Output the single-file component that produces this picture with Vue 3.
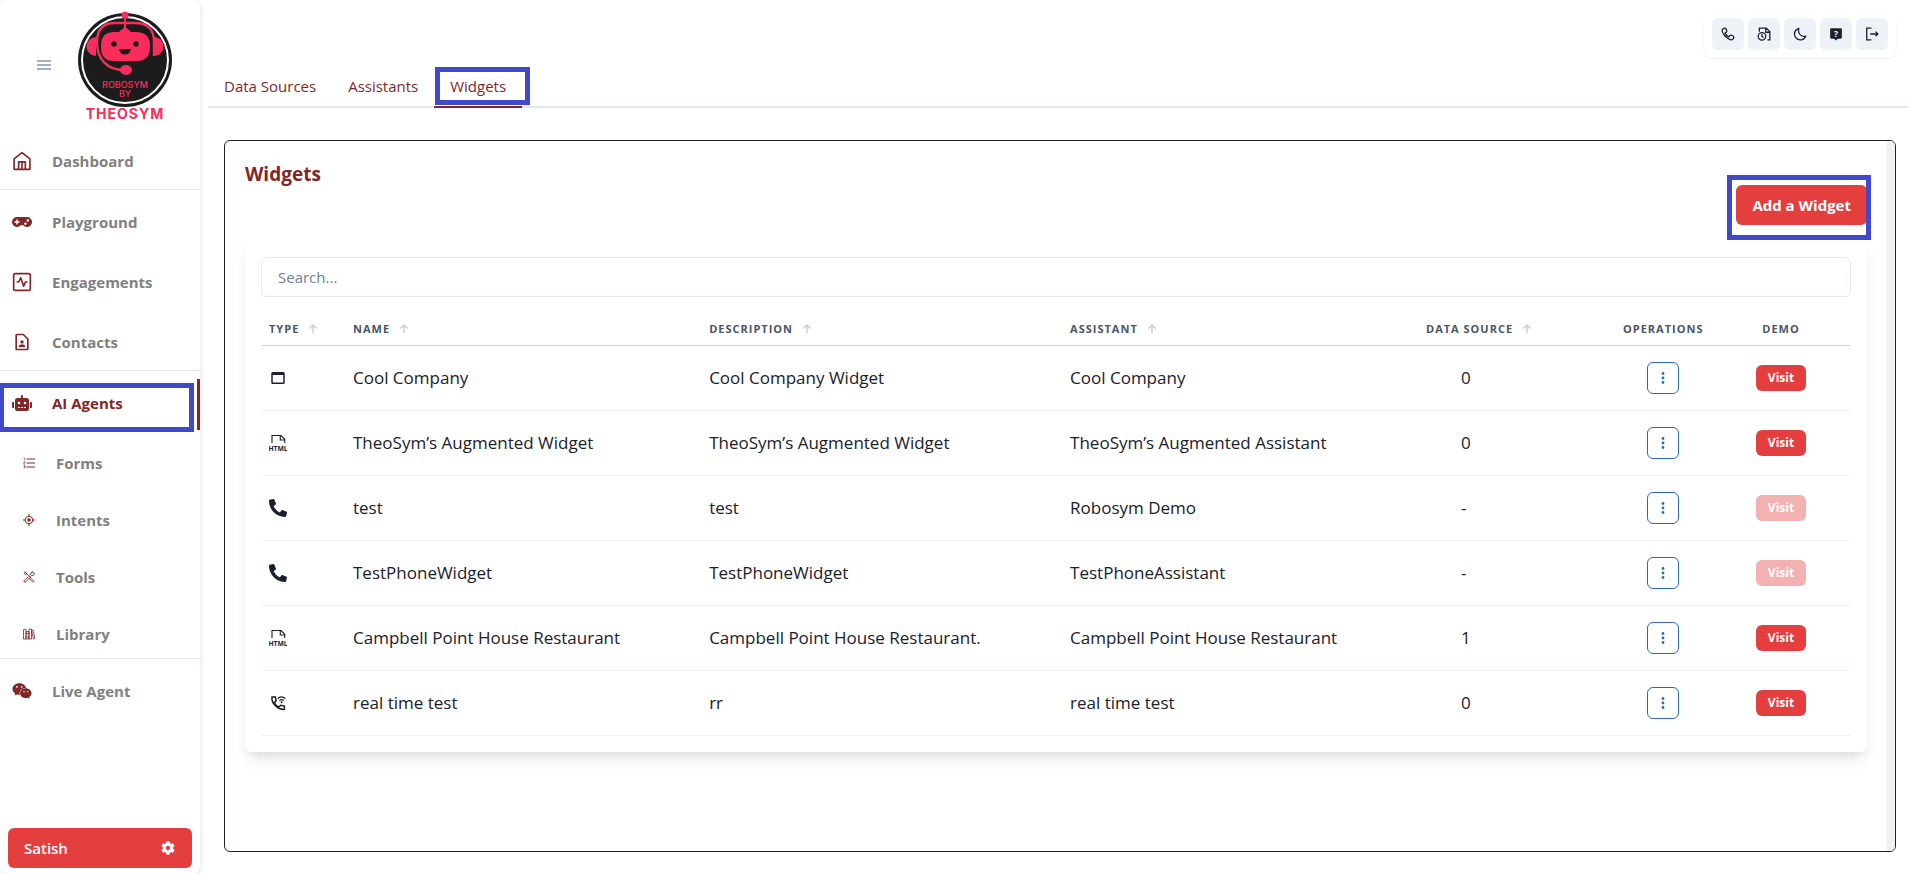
<template>
  <div class="layout">
    <aside class="sidebar">
      <div class="brand">
        <button class="menu-btn" aria-label="Toggle menu">
          <svg viewBox="0 0 14 10" width="14" height="10"><path d="M0 1h14M0 5h14M0 9h14" stroke="#a0aec0" stroke-width="2" /></svg>
        </button>
        <svg class="logo" viewBox="0 0 96 112" width="96" height="112">
          <circle cx="48" cy="51" r="47" fill="#1c1c1c" />
          <circle cx="48" cy="51" r="43" fill="none" stroke="#fff" stroke-width="2" />
          <path d="M19 28a9.500 9.500 0 0 0 0 19zM77 28a9.500 9.500 0 0 1 0 19z" fill="#f92d5c" />
          <path d="M77 47V33Q77 14 58 14H38Q20 14 20 33C20 50 30 61 47 61" fill="none" stroke="#f92d5c" stroke-width="2.400" />
          <path d="M48 6v17" stroke="#f92d5c" stroke-width="2" />
          <circle cx="48" cy="6" r="3.600" fill="#f92d5c" />
          <path d="M42 23q1-2 3-2.500l3-3 3 3q2 .5 3 2.500h5q14 0 14 14v1q0 14-14 14H37q-13 0-13-14v-1q0-14 13-14z" fill="#f92d5c" />
          <circle cx="37" cy="35" r="2.700" fill="#1c1c1c" />
          <circle cx="59" cy="35" r="2.700" fill="#1c1c1c" />
          <path d="M42 40h12q-1 5.500-6 5.500T42 40z" fill="#1c1c1c" />
          <ellipse cx="49" cy="61" rx="6" ry="5" fill="#f92d5c" />
          <text x="48" y="79" class="logo-small">ROBOSYM</text>
          <text x="48" y="88" class="logo-small">BY</text>
          <text x="48" y="110" class="logo-name">THEOSYM</text>
        </svg>
      </div>
      <nav class="nav">
        <a
          v-for="item in menu"
          :key="item.label"
          href="#"
          class="nav-item"
          :class="{ sub: item.sub, active: item.active, divided: item.divided }"
          @click.prevent
        >
          <svg class="nav-icon" :viewBox="item.box || '0 0 24 24'" v-html="icons[item.icon]"></svg>
          <span>{{ item.label }}</span>
          <i v-if="item.active" class="marker marker-nav"></i>
        </a>
      </nav>
      <button class="user-btn">
        <span>Satish</span>
        <svg viewBox="0 0 512 512" width="14" height="14" v-html="icons.cog"></svg>
      </button>
    </aside>

    <main class="main">
      <header class="topbar">
        <div class="tabs" role="tablist">
          <button
            v-for="tab in tabs"
            :key="tab"
            class="tab"
            role="tab"
            :class="{ active: tab === currentTab }"
            @click="currentTab = tab"
          >
            {{ tab }}
            <i v-if="tab === currentTab" class="marker marker-tab"></i>
          </button>
        </div>
        <div class="tools">
          <button v-for="tool in tools" :key="tool.icon" class="tool" :aria-label="tool.label">
            <svg viewBox="0 0 24 24" width="14" height="14" v-html="icons[tool.icon]"></svg>
          </button>
        </div>
      </header>

      <section class="panel">
        <div class="panel-body">
          <div class="panel-head">
            <h1>Widgets</h1>
            <button class="add-btn">Add a Widget<i class="marker marker-add"></i></button>
          </div>
          <div class="card">
            <input v-model="search" class="search" type="text" placeholder="Search..." aria-label="Search" />
            <table>
              <colgroup>
                <col v-for="col in columns" :key="col.label" :class="'col-' + col.key" />
              </colgroup>
              <thead>
                <tr>
                  <th v-for="col in columns" :key="col.label" :class="{ center: !col.sortable }">
                    {{ col.label }}
                    <svg v-if="col.sortable" class="sort" viewBox="0 0 8 9" width="8" height="9">
                      <path d="M4 9V1M.5 4.500L4 1l3.500 3.500" fill="none" stroke="#c8cbd2" stroke-width="1.400" />
                    </svg>
                  </th>
                </tr>
              </thead>
              <tbody>
                <tr v-for="row in filtered" :key="row.name">
                  <td><svg class="type-icon" :viewBox="row.type === 'phone' ? '0 0 512 512' : '0 0 24 24'" v-html="icons[row.type]"></svg></td>
                  <td>{{ row.name }}</td>
                  <td>{{ row.description }}</td>
                  <td>{{ row.assistant }}</td>
                  <td class="source">{{ row.source }}</td>
                  <td class="center">
                    <button class="more-btn" aria-label="Operations">
                      <svg viewBox="0 0 4 14" width="4" height="14"><circle cx="2" cy="2.500" r="1.400" /><circle cx="2" cy="7" r="1.400" /><circle cx="2" cy="11.500" r="1.400" /></svg>
                    </button>
                  </td>
                  <td class="center"><button class="visit-btn" :disabled="row.source === '-'">Visit</button></td>
                </tr>
              </tbody>
            </table>
          </div>
        </div>
        <div class="track"></div>
      </section>
    </main>
  </div>
</template>

<script setup>
import { ref, computed } from 'vue'

const icons = {
  home: '<path d="M2.500 22V9.500L12 2l9.500 7.500V22zM8 22v-9h8v9M12 13v9" fill="none" stroke="currentColor" stroke-width="2" stroke-linejoin="round"/>',
  gamepad: '<path fill-rule="evenodd" d="M6 6h12a6 6 0 1 1-4.500 10h-3A6 6 0 1 1 6 6zM5.200 9v2.200H3v1.600h2.200V15h1.600v-2.200H9v-1.600H6.800V9zM16 12.500a1.500 1.500 0 1 0 .1 0zM19 8.600a1.500 1.500 0 1 0 .1 0z"/>',
  pulse: '<rect x="2" y="2" width="20" height="20" rx="2" fill="none" stroke="currentColor" stroke-width="2"/><path d="M5.500 12H8l2.500-5 3.500 10 2-5h2.500" fill="none" stroke="currentColor" stroke-width="2" stroke-linejoin="round"/>',
  contact: '<path fill-rule="evenodd" d="M14 2H6C4.900 2 4 2.900 4 4v16c0 1.100.9 2 2 2h12c1.100 0 2-.9 2-2V8zM18 20H6V4h7.200L18 8.800z"/><circle cx="12" cy="12" r="2"/><path d="M8 18c0-2.500 2-3 4-3s4 .5 4 3z"/>',
  robot: '<path d="M32 224H64V416H32A32 32 0 0 1 0 384V256A32 32 0 0 1 32 224zm512-48V448a64 64 0 0 1-64 64H160a64 64 0 0 1-64-64V176a80 80 0 0 1 80-80H288V32a32 32 0 0 1 64 0V96H464A80 80 0 0 1 544 176zM264 256a40 40 0 1 0-40 40A40 40 0 0 0 264 256zm-8 128H192v32h64zm96 0H288v32h64zM456 256a40 40 0 1 0-40 40A40 40 0 0 0 456 256zm-8 128H384v32h64zM640 256V384a32 32 0 0 1-32 32H576V224h32A32 32 0 0 1 640 256z"/>',
  list: '<path d="M7 4h17M7 12h17M7 20h17" stroke="currentColor" stroke-width="2"/><path d="M1 2h2.500v5M1 9.500h3L1 14h3M1 17h3v5H1M2 19.500h2" fill="none" stroke="currentColor" stroke-width="1.300"/>',
  target: '<circle cx="12" cy="12" r="7.500" fill="none" stroke="currentColor" stroke-width="2"/><circle cx="12" cy="12" r="3.500"/><path d="M12 0v5M12 19v5M0 12h5M19 12h5" stroke="currentColor" stroke-width="2"/>',
  tools: '<path d="M2 2l4 1 1.500 3L18 16.500l4 4-2 2-8-8M7.500 6L5 7.500 1.500 4M13 9l3-3V3.500L19 1l1 3 3 1-2.500 4H17L6 21.500q-2 1.500-3.500 0T3 18l7-6" fill="none" stroke="currentColor" stroke-width="1.800" stroke-linejoin="round"/>',
  library: '<path d="M1 3h5v19H1zM6 7h6v15H6zM12 2h5v20h-5zM17 5l3-1 4 17-3 1zM6 11h6M6 18h6" fill="none" stroke="currentColor" stroke-width="1.600"/>',
  wechat: '<path d="M385.200 167.600c6.400 0 12.600.3 18.800 1.100C387.400 90.300 303.300 32 207.700 32 100.500 32 13 104.800 13 197.400c0 53.400 29.300 97.500 77.900 131.600l-19.300 58.600 68-34.100c24.400 4.800 43.800 9.700 68.200 9.700 6.200 0 12.100-.3 18.300-.8-4-12.900-6.200-26.600-6.200-40.800-.1-84.900 72.900-154 165.300-154zm-104.500-52.900c14.500 0 24.200 9.700 24.200 24.400 0 14.500-9.700 24.200-24.200 24.200-14.800 0-29.300-9.700-29.300-24.200.1-14.700 14.600-24.400 29.300-24.400zm-136.400 48.600c-14.500 0-29.300-9.700-29.300-24.200 0-14.800 14.800-24.400 29.300-24.400 14.800 0 24.400 9.700 24.400 24.400 0 14.600-9.600 24.200-24.400 24.200zM563 319.400c0-77.900-77.900-141.300-165.400-141.300-92.700 0-165.400 63.400-165.400 141.300S305 460.700 397.600 460.700c19.300 0 38.900-5.100 58.600-9.900l53.400 29.300-14.800-48.600C534 402.100 563 363.200 563 319.400zm-219.100-24.500c-9.700 0-19.300-9.700-19.300-19.600 0-9.700 9.700-19.300 19.300-19.300 14.800 0 24.400 9.700 24.400 19.300 0 10-9.700 19.600-24.400 19.600zm107.100 0c-9.700 0-19.300-9.700-19.300-19.600 0-9.700 9.700-19.300 19.300-19.300 14.500 0 24.400 9.700 24.400 19.300.1 10-9.900 19.600-24.400 19.600z"/>',
  cog: '<path d="M487.400 315.700l-42.600-24.600c4.300-23.200 4.300-47 0-70.200l42.600-24.600c4.900-2.800 7.100-8.600 5.500-14-11.100-35.600-30-67.800-54.700-94.600-3.800-4.100-10-5.100-14.800-2.300L380.800 110c-17.900-15.400-38.500-27.300-60.800-35.100V25.800c0-5.600-3.900-10.500-9.400-11.700-36.700-8.200-74.300-7.800-109.200 0-5.500 1.200-9.400 6.100-9.400 11.700V75c-22.200 7.900-42.800 19.800-60.800 35.100L88.700 85.500c-4.900-2.800-11-1.900-14.800 2.300-24.700 26.700-43.600 58.900-54.700 94.600-1.700 5.400.6 11.200 5.500 14L67.300 221c-4.300 23.200-4.300 47 0 70.200l-42.600 24.600c-4.900 2.800-7.100 8.600-5.500 14 11.100 35.600 30 67.800 54.700 94.600 3.800 4.100 10 5.100 14.800 2.300l42.600-24.600c17.900 15.400 38.500 27.300 60.800 35.100v49.200c0 5.600 3.900 10.500 9.400 11.700 36.700 8.200 74.300 7.800 109.200 0 5.500-1.200 9.400-6.100 9.400-11.700v-49.200c22.200-7.900 42.800-19.800 60.800-35.100l42.600 24.600c4.900 2.800 11 1.900 14.800-2.300 24.700-26.700 43.600-58.900 54.700-94.600 1.500-5.500-.7-11.300-5.600-14.100zM256 336c-44.100 0-80-35.900-80-80s35.900-80 80-80 80 35.900 80 80-35.900 80-80 80z"/>',
  call: '<path d="M5 13Q1.500 8 2 5 4.500 1 7 2q3 1.500 3 5 0 2-3 3.500 2 4.500 6.500 6.500Q15 14 17 14q4 0 5 3.500.5 2.500-3.500 4.500-3 .5-7.500-3T5 13z" fill="none" stroke="currentColor" stroke-width="2.200" stroke-linejoin="round"/>',
  record: '<circle cx="8.500" cy="16" r="6.500" fill="none" stroke="currentColor" stroke-width="2.200"/><path d="M8.500 12v4l2.500 2M4 8V2h12l6 6v14h-4M15 2v7h7" fill="none" stroke="currentColor" stroke-width="2.200"/>',
  moon: '<path d="M10 2.500A10 10 0 1 0 22 15.500Q17 17.500 12.500 13.500T10 2.500z" fill="none" stroke="currentColor" stroke-width="2.200" stroke-linejoin="round"/>',
  help: '<path d="M4 2h16q2 0 2 2v14q0 2-2 2h-5l-3 3-3-3H4q-2 0-2-2V4q0-2 2-2z"/><text x="12" y="17" font-size="16" font-weight="700" text-anchor="middle" fill="#edf2f7">?</text>',
  logout: '<path d="M11 2H3v20h8M9 12h13M18 8l4 4-4 4" fill="none" stroke="currentColor" stroke-width="2.200"/>',
  asset: '<path fill-rule="evenodd" d="M5 4h14q2 0 2 2v12q0 2-2 2H5q-2 0-2-2V6q0-2 2-2zM5 8v10h14V8z"/>',
  html: '<path d="M4 12V2h12l5 5v5M15 2v6h6" fill="none" stroke="currentColor" stroke-width="1.500"/><text x="12" y="22" font-size="9" font-weight="700" text-anchor="middle">HTML</text>',
  phone: '<path d="M497.400 361.800l-112-48a24 24 0 0 0-28 6.900l-49.600 60.600A370.700 370.700 0 0 1 130.600 204.100l60.600-49.600a24 24 0 0 0 6.900-28l-48-112A24.200 24.200 0 0 0 122.600.6l-104 24A24 24 0 0 0 0 48c0 256.500 207.900 464 464 464a24 24 0 0 0 23.400-18.600l24-104a24.300 24.300 0 0 0-14-27.600z"/>',
  wifi: '<path d="M4 4h4.500l1 5L7 11.500q2 4 6 6l2.500-2.500 5 1v4.500Q14 21 8.500 15.500T4 4z" fill="none" stroke="currentColor" stroke-width="2"/><path d="M11.500 6q5-4.500 10.500 0M13.800 8.700q3-2.400 6 0" fill="none" stroke="currentColor" stroke-width="1.600"/><circle cx="16.800" cy="11" r="1.300"/>'
}

const menu = [
  { label: 'Dashboard', icon: 'home', divided: true },
  { label: 'Playground', icon: 'gamepad' },
  { label: 'Engagements', icon: 'pulse' },
  { label: 'Contacts', icon: 'contact', divided: true },
  { label: 'AI Agents', icon: 'robot', box: '0 0 640 512', active: true },
  { label: 'Forms', icon: 'list', sub: true },
  { label: 'Intents', icon: 'target', sub: true },
  { label: 'Tools', icon: 'tools', sub: true },
  { label: 'Library', icon: 'library', sub: true, divided: true },
  { label: 'Live Agent', icon: 'wechat', box: '0 0 576 512' }
]

const tabs = ['Data Sources', 'Assistants', 'Widgets']
const currentTab = ref('Widgets')

const tools = [
  { icon: 'call', label: 'Call' },
  { icon: 'record', label: 'History' },
  { icon: 'moon', label: 'Dark mode' },
  { icon: 'help', label: 'Help' },
  { icon: 'logout', label: 'Log out' }
]

const columns = [
  { key: 'type', label: 'Type', sortable: true },
  { key: 'name', label: 'Name', sortable: true },
  { key: 'description', label: 'Description', sortable: true },
  { key: 'assistant', label: 'Assistant', sortable: true },
  { key: 'source', label: 'Data Source', sortable: true },
  { key: 'operations', label: 'Operations' },
  { key: 'demo', label: 'Demo' }
]

const rows = [
  { type: 'asset', name: 'Cool Company', description: 'Cool Company Widget', assistant: 'Cool Company', source: '0' },
  { type: 'html', name: 'TheoSym’s Augmented Widget', description: 'TheoSym’s Augmented Widget', assistant: 'TheoSym’s Augmented Assistant', source: '0' },
  { type: 'phone', name: 'test', description: 'test', assistant: 'Robosym Demo', source: '-' },
  { type: 'phone', name: 'TestPhoneWidget', description: 'TestPhoneWidget', assistant: 'TestPhoneAssistant', source: '-' },
  { type: 'html', name: 'Campbell Point House Restaurant', description: 'Campbell Point House Restaurant.', assistant: 'Campbell Point House Restaurant', source: '1' },
  { type: 'wifi', name: 'real time test', description: 'rr', assistant: 'real time test', source: '0' }
]

const search = ref('')
const filtered = computed(() => rows.filter((row) => row.name.toLowerCase().includes(search.value.toLowerCase())))
</script>

<style>
body {
  margin: 0;
  background: #fff;
}
</style>

<style scoped>
* {
  box-sizing: border-box;
}
.layout {
  display: flex;
  min-height: 100vh;
  font-family: "Open Sans", "Noto Sans", sans-serif;
  font-size: 15px;
  line-height: 24px;
  color: #1a202c;
}
button,
input {
  font: inherit;
  color: inherit;
}
button {
  padding: 0;
  border: none;
  background: none;
  cursor: pointer;
}
svg {
  display: block;
  flex: none;
  fill: currentColor;
}
.marker {
  position: absolute;
  border: 5px solid #4048cb;
  pointer-events: none;
}

/* sidebar */
.sidebar {
  display: flex;
  flex-direction: column;
  flex: none;
  width: 200px;
  padding-bottom: 6px;
  background: #fff;
  border-radius: 8px;
  box-shadow: 0 1px 6px rgba(0, 0, 0, 0.12);
}
.brand {
  display: flex;
  align-items: center;
  gap: 26px;
  height: 129px;
  padding: 1px 0 0 37px;
}
.logo-small {
  font: 500 9px Inter, sans-serif;
  fill: #f92d5c;
  text-anchor: middle;
}
.logo-name {
  font: 700 14px Inter, sans-serif;
  letter-spacing: 1px;
  fill: #f92d5c;
  text-anchor: middle;
}
.nav-item {
  position: relative;
  display: flex;
  align-items: center;
  gap: 20px;
  height: 52px;
  margin-top: 8px;
  padding: 0 0 4px 12px;
  color: #808080;
  font-weight: 700;
  text-decoration: none;
}
.nav-item.divided {
  height: 53px;
  border-bottom: 1px solid #e2e8f0;
}
.nav-item.sub {
  gap: 21px;
  height: 49px;
  padding: 0 0 0 23px;
}
.nav-item.sub.divided {
  height: 50px;
}
.nav-icon {
  width: 20px;
  height: 20px;
  color: #822727;
}
.sub .nav-icon {
  width: 12px;
  height: 12px;
}
.nav-item.active {
  height: 51px;
  color: #822727;
  border-right: 3px solid #822727;
}
.marker-nav {
  inset: 4px 3px -2px -1px;
}
.user-btn {
  display: flex;
  align-items: center;
  justify-content: space-between;
  height: 40px;
  margin: auto 8px 0;
  padding: 0 17px 0 16px;
  border-radius: 6px;
  background: #e53e3e;
  color: #fff;
  font-weight: 600;
}

/* main area */
.main {
  display: flex;
  flex-direction: column;
  flex: 1;
  min-width: 0;
}
.topbar {
  display: flex;
  justify-content: space-between;
  height: 108px;
  margin-left: 8px;
  border-bottom: 2px solid #e2e8f0;
}
.tabs {
  display: flex;
  align-self: flex-end;
  margin-bottom: -2px;
}
.tab {
  position: relative;
  padding: 8px 16px;
  border-bottom: 2px solid transparent;
  color: #822727;
}
.tab.active {
  border-color: #822727;
}
.marker-tab {
  inset: 1px -8px 1px 1px;
}
.tools {
  display: flex;
  align-self: flex-start;
  gap: 4px;
  margin: 10px 12px 0 0;
  padding: 8px;
  border-radius: 8px;
  box-shadow: 0 1px 2px rgba(0, 0, 0, 0.08);
}
.tool {
  display: grid;
  place-items: center;
  width: 32px;
  height: 32px;
  border-radius: 6px;
  background: #edf2f7;
}
.panel {
  display: flex;
  flex: 1;
  margin: 32px 12px 22px 24px;
  overflow: hidden;
  border: 1px solid #1a202c;
  border-radius: 6px;
}
.panel-body {
  flex: 1;
  min-width: 0;
  padding: 18px 20px;
}
.track {
  width: 8px;
  background: #f0f0f0;
}
.panel-head {
  display: flex;
  align-items: flex-start;
  justify-content: space-between;
  margin-bottom: 16px;
}
h1 {
  margin: 0;
  font-size: 19px;
  line-height: 30px;
  color: #822727;
}
.add-btn {
  position: relative;
  height: 40px;
  margin-top: 26px;
  padding: 0 16px;
  border-radius: 6px;
  background: #e53e3e;
  color: #fff;
  font-weight: 700;
}
.marker-add {
  inset: -10px -4px -15px -9px;
}
.card {
  padding: 16px;
  border-radius: 6px;
  background: #fff;
  box-shadow: 0 10px 15px -3px rgba(0, 0, 0, 0.1), 0 4px 6px -2px rgba(0, 0, 0, 0.05);
}
.search {
  display: block;
  width: 100%;
  height: 40px;
  padding: 0 16px;
  border: 1px solid #e2e8f0;
  border-radius: 6px;
  outline: none;
}
.search::placeholder {
  color: #718096;
}
table {
  width: 100%;
  margin-top: 16px;
  border-collapse: separate;
  border-spacing: 0;
  table-layout: fixed;
}
.col-type {
  width: 84px;
}
.col-name {
  width: 22.4%;
}
.col-description {
  width: 22.7%;
}
.col-source {
  width: 197px;
}
.col-operations {
  width: 96px;
}
.col-demo {
  width: 140px;
}
th {
  height: 33px;
  padding: 0 8px;
  border-bottom: 1px solid #cbd5e0;
  color: #4a5568;
  font-size: 11px;
  font-weight: 700;
  line-height: 16px;
  letter-spacing: 1px;
  text-align: left;
  text-transform: uppercase;
  white-space: nowrap;
}
.sort {
  display: inline-block;
  margin-left: 6px;
}
td {
  height: 65px;
  padding: 0 8px;
  border-bottom: 1px solid #edf2f7;
  font-size: 17px;
}
.center {
  text-align: center;
}
td.source {
  padding-left: 43px;
}
.type-icon {
  width: 18px;
  height: 18px;
}
.more-btn {
  display: inline-grid;
  place-items: center;
  width: 32px;
  height: 32px;
  border: 1px solid #2b6cb0;
  border-radius: 6px;
  color: #2b6cb0;
  vertical-align: middle;
}
.visit-btn {
  height: 26px;
  padding: 0 12px;
  border-radius: 6px;
  background: #e53e3e;
  color: #fff;
  font-size: 12px;
  font-weight: 700;
  vertical-align: middle;
}
.visit-btn:disabled {
  opacity: 0.4;
}
</style>
